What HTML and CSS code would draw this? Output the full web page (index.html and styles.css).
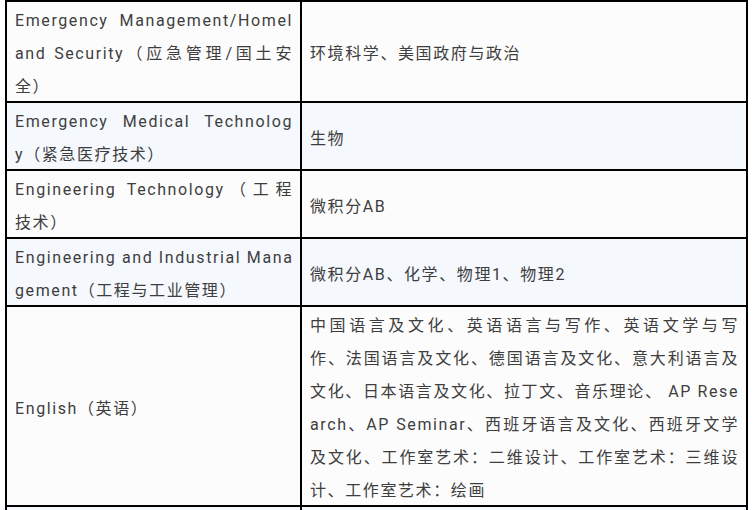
FILE: index.html
```html
<!DOCTYPE html>
<html lang="zh-CN">
<head>
<meta charset="utf-8">
<title>Majors</title>
<link rel="stylesheet" href="styles.css">
</head>
<body>
<table class="grid">
  <colgroup><col class="col-major"><col class="col-course"></colgroup>
  <tr class="stub"><td></td><td></td></tr>
  <tr class="row-plain">
    <td><div class="txt"><span class="jl">Emergency Management/Homel</span><span class="jl">and Security（应急管理/国土安</span><span class="ln">全）</span></div></td>
    <td><div class="txt">环境科学、美国政府与政治</div></td>
  </tr>
  <tr class="row-tint">
    <td><div class="txt"><span class="jl">Emergency Medical Technolog</span><span class="ln">y（紧急医疗技术）</span></div></td>
    <td><div class="txt">生物</div></td>
  </tr>
  <tr class="row-plain">
    <td><div class="txt"><span class="jl">Engineering Technology（工程</span><span class="ln">技术）</span></div></td>
    <td><div class="txt">微积分AB</div></td>
  </tr>
  <tr class="row-tint">
    <td><div class="txt"><span class="jl">Engineering and Industrial Mana</span><span class="ln">gement（工程与工业管理）</span></div></td>
    <td><div class="txt">微积分AB、化学、物理1、物理2</div></td>
  </tr>
  <tr class="row-plain">
    <td><div class="txt">English（英语）</div></td>
    <td><div class="txt"><span class="jl">中国语言及文化、英语语言与写作、英语文学与写</span><span class="jl">作、法国语言及文化、德国语言及文化、意大利语言及</span><span class="jl">文化、日本语言及文化、拉丁文、音乐理论、 AP Rese</span><span class="jl">arch、AP Seminar、西班牙语言及文化、西班牙文学</span><span class="jl">及文化、工作室艺术：二维设计、工作室艺术：三维设</span><span class="ln">计、工作室艺术：绘画</span></div></td>
  </tr>
  <tr class="stub row-tint"><td></td><td></td></tr>
</table>
</body>
</html>
```

FILE: styles.css
```css
html, body {
  overflow: hidden;
}
body {
  margin: 0;
  background: #ffffff;
  font-family: "Roboto", "Noto Sans CJK SC", sans-serif;
  font-size: 16px;
  color: #3e3e3e;
}
.grid {
  margin-left: 5px;
  width: 743px;
  border-collapse: collapse;
  table-layout: fixed;
  letter-spacing: 1.6px;
  line-height: 33px;
}
.col-major { width: 295px; }
.grid td {
  border: 2px solid #000;
  padding: 0 7px 0 8px;
  vertical-align: middle;
  text-align: justify;
  word-break: break-all;
}
.txt {
  padding-top: 2px;
  margin-bottom: -2px;
}
.row-plain td { background: #fcfcfc; }
.row-tint td { background: #f5f8fd; }
.stub td {
  height: 0;
  line-height: 0;
  font-size: 0;
  padding: 0;
}
.grid tr:first-child td { border-top: 0; }
.grid tr:last-child td { border-bottom: 0; height: 4px; }
.jl {
  display: block;
  white-space: nowrap;
  text-align: justify;
  text-align-last: justify;
}
.ln {
  display: block;
  white-space: nowrap;
}
```
